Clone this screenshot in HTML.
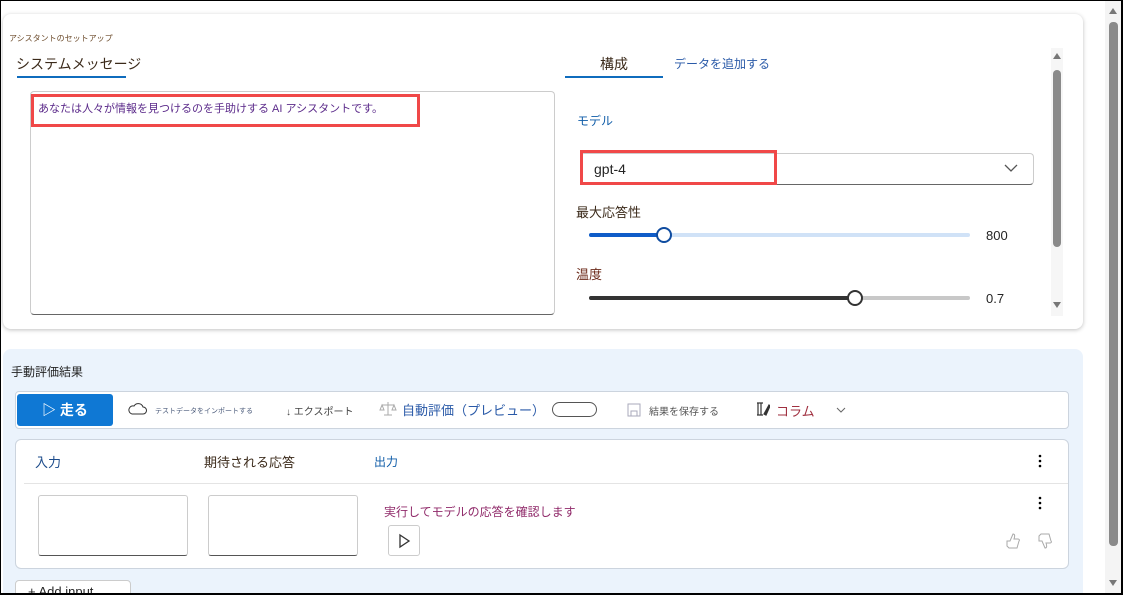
<!DOCTYPE html>
<html style="overflow:hidden"><head><meta charset="utf-8"><style>
*{box-sizing:border-box;margin:0;padding:0}
html,body{width:1123px;height:595px;overflow:hidden}
body{background:#fff;font-family:"Liberation Sans","Noto Sans CJK JP",sans-serif;position:relative;color:#242424}
.a{position:absolute;white-space:nowrap}
.frame{position:absolute;left:0;top:0;width:1123px;height:595px;border:1px solid #000;border-right:2px solid #000;border-bottom:2px solid #000;pointer-events:none;z-index:10}
</style></head><body>
<div class="frame"></div>
<!-- top card -->
<div class="a" style="left:3px;top:14px;width:1080px;height:315px;background:#fff;border-radius:8px;box-shadow:0 1px 4px rgba(0,0,0,.25)"></div>
<div class="a" style="left:9px;top:33px;font-size:8px;color:#6b4a2a">アシスタントのセットアップ</div>
<div class="a" style="left:16px;top:54px;font-size:14px;color:#3b2a1a">システムメッセージ</div>
<div class="a" style="left:17px;top:76px;width:109px;height:2px;background:#0f6cbd"></div>
<div class="a" style="left:30px;top:91px;width:525px;height:224px;border:1px solid #ccc;border-bottom:1px solid #666;border-radius:4px"></div>
<div class="a" style="left:31px;top:94px;width:389px;height:33px;border:3px solid #f04848"></div>
<div class="a" style="left:38px;top:100px;font-size:11px;color:#5b2a8a">あなたは人々が情報を見つけるのを手助けする AI アシスタントです。</div>
<div class="a" style="left:600px;top:54px;font-size:14px;color:#3b2a1a">構成</div>
<div class="a" style="left:565px;top:76px;width:98px;height:2px;background:#0f6cbd"></div>
<div class="a" style="left:674px;top:55px;font-size:12px;color:#2a5aa8">データを追加する</div>
<div class="a" style="left:577px;top:112px;font-size:12px;color:#0f5ca8">モデル</div>
<div class="a" style="left:580px;top:153px;width:454px;height:32px;border:1px solid #ccc;border-bottom:1px solid #666;border-radius:4px"></div>
<div class="a" style="left:580px;top:150px;width:197px;height:35px;border:3px solid #f04848"></div>
<div class="a" style="left:594px;top:161px;font-size:14px;color:#242424">gpt-4</div>
<svg class="a" style="left:1003px;top:163px" width="16" height="10"><path d="M2 2l6 6 6-6" stroke="#555" fill="none" stroke-width="1.3"/></svg>
<div class="a" style="left:576px;top:202px;font-size:13px;color:#3b2a1a">最大応答性</div>
<div class="a" style="left:589px;top:233px;width:381px;height:4px;border-radius:2px;background:#d0e2f7"></div>
<div class="a" style="left:589px;top:233px;width:75px;height:4px;border-radius:2px;background:#0f5cc8"></div>
<div class="a" style="left:656px;top:227px;width:16px;height:16px;border-radius:50%;background:#fff;border:2px solid #0f4ca0"></div>
<div class="a" style="left:986px;top:228px;font-size:13px">800</div>
<div class="a" style="left:576px;top:264px;font-size:13px;color:#6b2a1a">温度</div>
<div class="a" style="left:589px;top:296px;width:381px;height:4px;border-radius:2px;background:#c8c8c8"></div>
<div class="a" style="left:589px;top:296px;width:266px;height:4px;border-radius:2px;background:#333"></div>
<div class="a" style="left:847px;top:290px;width:16px;height:16px;border-radius:50%;background:#fff;border:2px solid #333"></div>
<div class="a" style="left:986px;top:291px;font-size:13px">0.7</div>
<!-- inner scrollbar -->
<div class="a" style="left:1051px;top:48px;width:12px;height:268px;background:#f6f6f6"></div>
<div class="a" style="left:1053px;top:53px;width:0;height:0;border-left:4px solid transparent;border-right:4px solid transparent;border-bottom:6px solid #777"></div>
<div class="a" style="left:1053px;top:70px;width:8px;height:177px;border-radius:4px;background:#8a8a8a"></div>
<div class="a" style="left:1053px;top:302px;width:0;height:0;border-left:4px solid transparent;border-right:4px solid transparent;border-top:6px solid #777"></div>
<!-- outer scrollbar -->
<div class="a" style="left:1105px;top:1px;width:17px;height:593px;background:#f4f4f4"></div>
<div class="a" style="left:1109px;top:8px;width:0;height:0;border-left:4px solid transparent;border-right:4px solid transparent;border-bottom:6px solid #777"></div>
<div class="a" style="left:1109px;top:22px;width:9px;height:524px;border-radius:4px;background:#8a8a8a"></div>
<div class="a" style="left:1109px;top:580px;width:0;height:0;border-left:4px solid transparent;border-right:4px solid transparent;border-top:6px solid #777"></div>
<!-- bottom panel -->
<div class="a" style="left:3px;top:349px;width:1080px;height:246px;background:#ebf3fc;border-radius:8px 8px 0 0"></div>
<div class="a" style="left:11px;top:363px;font-size:12px;color:#242424">手動評価結果</div>
<div class="a" style="left:15px;top:391px;width:1054px;height:38px;background:#fff;border:1px solid #ccd4de;border-radius:4px"></div>
<div class="a" style="left:17px;top:394px;width:96px;height:32px;background:#0f78d4;border-radius:3px;color:#fff;font-size:14px;font-weight:bold;text-align:center;line-height:32px">▷ 走る</div>
<svg class="a" style="left:128px;top:403px" width="20" height="12"><path d="M4 11h11a3.5 3.5 0 0 0 0-7 5 5 0 0 0-9-1 4 4 0 0 0-2 8z" stroke="#333" fill="none"/></svg>
<div class="a" style="left:155px;top:406px;font-size:7px;color:#4a5a7a">テストデータをインポートする</div>
<div class="a" style="left:286px;top:403px;font-size:10px;color:#444">↓ エクスポート</div>
<svg class="a" style="left:379px;top:401px" width="18" height="16"><path d="M9 1v13M3 4h12M3 4l-2 5h4zM15 4l-2 5h4zM5 14h8" stroke="#aaa" fill="none"/></svg>
<div class="a" style="left:402px;top:400px;font-size:13px;color:#2a5aa8">自動評価（プレビュー）</div>
<div class="a" style="left:552px;top:402px;width:45px;height:15px;border:1px solid #555;border-radius:8px"></div>
<svg class="a" style="left:627px;top:403px" width="14" height="14"><rect x="1" y="1" width="12" height="12" fill="none" stroke="#aab"/><rect x="4" y="8" width="6" height="5" fill="none" stroke="#aab"/></svg>
<div class="a" style="left:649px;top:403px;font-size:10px;color:#555">結果を保存する</div>
<svg class="a" style="left:756px;top:402px" width="14" height="14"><path d="M2 1v12M5 1v12M1 1h6M1 13h6M8 12l5-9 1 1-4 9z" stroke="#333" fill="#333" stroke-width="1.2"/></svg>
<div class="a" style="left:776px;top:401px;font-size:13px;color:#a03040">コラム</div>
<svg class="a" style="left:836px;top:407px" width="10" height="6"><path d="M1 1l4 4 4-4" stroke="#666" fill="none"/></svg>
<!-- table -->
<div class="a" style="left:15px;top:439px;width:1054px;height:130px;background:#fff;border:1px solid #ccd4de;border-radius:6px"></div>
<div class="a" style="left:35px;top:452px;font-size:13px;color:#1a4a8a">入力</div>
<div class="a" style="left:204px;top:452px;font-size:13px;color:#3b2a1a">期待される応答</div>
<div class="a" style="left:374px;top:453px;font-size:12px;color:#0f5ca8">出力</div>
<svg class="a" style="left:1038px;top:454px" width="4" height="14"><circle cx="2" cy="2" r="1.3"/><circle cx="2" cy="7" r="1.3"/><circle cx="2" cy="12" r="1.3"/></svg>
<div class="a" style="left:24px;top:483px;width:1044px;height:1px;background:#e4e4e4"></div>
<div class="a" style="left:38px;top:495px;width:150px;height:61px;border:1px solid #ccc;border-bottom:1px solid #555;border-radius:3px"></div>
<div class="a" style="left:208px;top:495px;width:150px;height:61px;border:1px solid #ccc;border-bottom:1px solid #555;border-radius:3px"></div>
<div class="a" style="left:384px;top:503px;font-size:12px;color:#902a6a">実行してモデルの応答を確認します</div>
<div class="a" style="left:388px;top:525px;width:32px;height:31px;border:1px solid #ccc;border-radius:3px"></div>
<svg class="a" style="left:396px;top:533px" width="16" height="16"><path d="M4 2l9 6-9 6z" stroke="#333" fill="none" stroke-width="1.3"/></svg>
<svg class="a" style="left:1038px;top:496px" width="4" height="14"><circle cx="2" cy="2" r="1.3"/><circle cx="2" cy="7" r="1.3"/><circle cx="2" cy="12" r="1.3"/></svg>
<svg class="a" style="left:1004px;top:532px" width="16" height="18"><path d="M3 9h3l3-7c2 0 2 2 1 5h4c1 0 2 1 1 2l-2 7H5l-2-2z" stroke="#aaa" fill="none"/></svg>
<svg class="a" style="left:1036px;top:532px" width="16" height="18"><path d="M3 9h3l3 7c2 0 2-2 1-5h4c1 0 2-1 1-2l-2-7H5L3 4z" stroke="#aaa" fill="none"/></svg>
<div class="a" style="left:15px;top:580px;width:116px;height:25px;background:#fff;border:1px solid #ccc;border-radius:4px;font-size:13px;padding-left:12px;line-height:22px">+ Add input</div>
</body></html>
